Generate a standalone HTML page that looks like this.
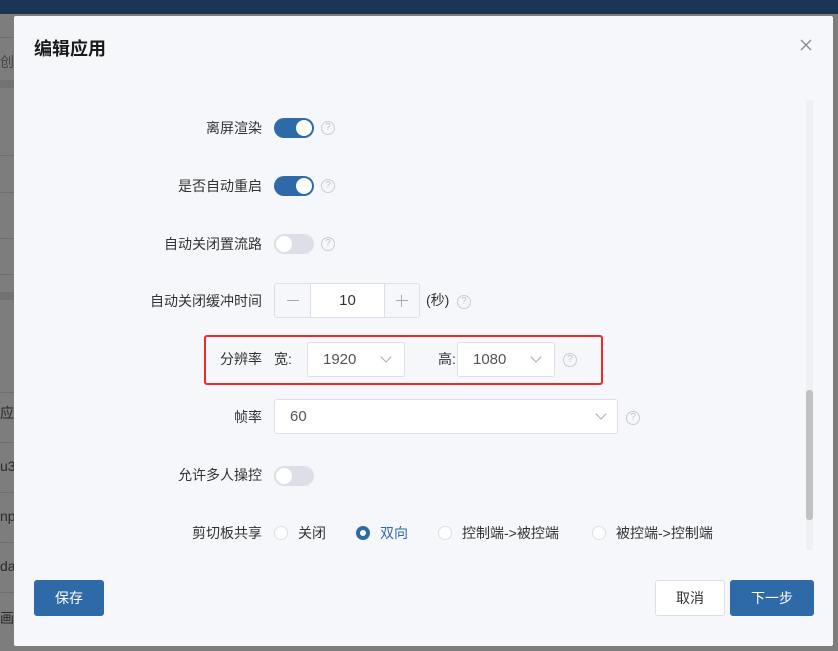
<!DOCTYPE html>
<html><head><meta charset="utf-8"><style>
*{box-sizing:border-box;margin:0;padding:0}
body{width:838px;height:651px;overflow:hidden;background:#7d7d7d;font-family:"Liberation Sans","Noto Sans CJK SC",sans-serif;position:relative;color:#333}
.top{position:absolute;left:0;top:0;width:838px;height:14px;background:#1b3553}
.bgline{position:absolute;left:0;width:14px;height:1px;background:#6e6e6e}
.bgt{position:absolute;left:0;font-size:14px;color:#2a2a2a}
.modal{position:absolute;left:14px;top:16px;width:819px;height:630px;background:#f5f7fb;border-radius:2px}
.title{position:absolute;left:20px;top:21px;font-size:18px;font-weight:bold;color:#1a1a1a;line-height:24px}
.close{position:absolute;left:785px;top:22px;width:14px;height:14px}
.lbl{position:absolute;right:571px;font-size:14px;line-height:20px;color:#333;white-space:nowrap}
.sw{position:absolute;left:260px;width:40px;height:20px;border-radius:10px;background:#2f6aa8}
.sw::after{content:"";position:absolute;top:2px;left:22px;width:16px;height:16px;border-radius:50%;background:#fff}
.sw.off{background:#dcdfe6}.sw.off::after{left:2px}
.q{position:absolute;width:14px;height:14px;border:1px solid #c8ccd6;border-radius:50%;font-size:10px;color:#c0c4cc;text-align:center;line-height:12px}
.box{position:absolute;background:#fff;border:1px solid #dcdfe6;border-radius:3px;font-size:15px;color:#555}
.chev{position:absolute;width:8px;height:8px;border-right:1px solid #aaa;border-bottom:1px solid #aaa;transform:rotate(45deg)}
.radio{position:absolute;width:14px;height:14px;border:1px solid #dcdfe6;border-radius:50%;background:#fff}
.rt{position:absolute;font-size:14px;line-height:20px;color:#333;white-space:nowrap}
.btn{position:absolute;border-radius:3px;font-size:14px;text-align:center;line-height:36px;height:36px}
</style></head><body>
<div class="top"></div>
<div class="bgline" style="top:37px"></div>
<div class="bgt" style="top:52px;color:#444">创</div>
<div class="bgline" style="top:80px;background:#727272;height:8px"></div>
<div class="bgline" style="top:155px"></div>
<div class="bgline" style="top:192px"></div>
<div class="bgline" style="top:238px"></div>
<div class="bgline" style="top:274px"></div>
<div class="bgline" style="top:292px;height:8px;background:#727272"></div>
<div class="bgline" style="top:392px"></div>
<div class="bgt" style="top:403px">应</div>
<div class="bgline" style="top:442px"></div>
<div class="bgt" style="top:458px">u3</div>
<div class="bgline" style="top:492px"></div>
<div class="bgt" style="top:508px">np</div>
<div class="bgline" style="top:542px"></div>
<div class="bgt" style="top:558px">da</div>
<div class="bgline" style="top:592px"></div>
<div class="bgt" style="top:608px">画</div>

<div class="modal">
<div class="title">编辑应用</div>
<svg class="close" viewBox="0 0 14 14"><path d="M2 2L12 12M12 2L2 12" stroke="#888" stroke-width="1.3"/></svg>
<div style="position:absolute;left:792px;top:84px;width:7px;height:450px;background:#eef0f3"></div>
<div style="position:absolute;left:792px;top:374px;width:7px;height:130px;background:#c1c1c1;border-radius:3px"></div>

<div class="lbl" style="top:102px">离屏渲染</div>
<div class="sw" style="top:102px"></div><div class="q" style="left:307px;top:105px">?</div>

<div class="lbl" style="top:160px">是否自动重启</div>
<div class="sw" style="top:160px"></div><div class="q" style="left:307px;top:163px">?</div>

<div class="lbl" style="top:218px">自动关闭置流路</div>
<div class="sw off" style="top:218px"></div><div class="q" style="left:307px;top:221px">?</div>

<div class="lbl" style="top:275px">自动关闭缓冲时间</div>
<div class="box" style="left:260px;top:267px;width:146px;height:35px;background:#f5f7fa">
 <div style="position:absolute;left:35px;top:0;width:75px;height:33px;background:#fff;border-left:1px solid #dcdfe6;border-right:1px solid #dcdfe6;text-align:center;line-height:33px;color:#333;font-size:15px">10</div>
 <div style="position:absolute;left:12px;top:16px;width:12px;height:1px;background:#aaa"></div>
 <div style="position:absolute;left:121px;top:16px;width:12px;height:1px;background:#aaa"></div>
 <div style="position:absolute;left:126px;top:11px;width:1px;height:12px;background:#aaa"></div>
</div>
<div class="rt" style="left:412px;top:274px">(秒)</div>
<div class="q" style="left:443px;top:279px">?</div>

<div style="position:absolute;left:190px;top:319px;width:399px;height:50px;border:2px solid #ee2a2a;border-radius:3px"></div>
<div class="rt" style="left:206px;top:333px">分辨率</div>
<div class="rt" style="left:260px;top:333px">宽:</div>
<div class="box" style="left:293px;top:326px;width:98px;height:35px"><span style="position:absolute;left:15px;top:8px">1920</span><div class="chev" style="left:74px;top:10px"></div></div>
<div class="rt" style="left:424px;top:333px">高:</div>
<div class="box" style="left:443px;top:326px;width:98px;height:35px"><span style="position:absolute;left:15px;top:8px">1080</span><div class="chev" style="left:74px;top:10px"></div></div>
<div class="q" style="left:549px;top:337px">?</div>

<div class="lbl" style="top:391px">帧率</div>
<div class="box" style="left:260px;top:383px;width:344px;height:35px"><span style="position:absolute;left:15px;top:8px">60</span><div class="chev" style="left:322px;top:10px"></div></div>
<div class="q" style="left:612px;top:395px">?</div>

<div class="lbl" style="top:449px">允许多人操控</div>
<div class="sw off" style="top:450px"></div>

<div class="lbl" style="top:507px">剪切板共享</div>
<div class="radio" style="left:260px;top:510px"></div><div class="rt" style="left:284px;top:507px">关闭</div>
<div class="radio" style="left:342px;top:510px;border:4px solid #2f6aa8"></div><div class="rt" style="left:366px;top:507px;color:#2f6aa8">双向</div>
<div class="radio" style="left:424px;top:510px"></div><div class="rt" style="left:448px;top:507px">控制端->被控端</div>
<div class="radio" style="left:578px;top:510px"></div><div class="rt" style="left:602px;top:507px">被控端->控制端</div>

<div class="btn" style="left:20px;top:564px;width:70px;background:#2f6aa8;color:#fff">保存</div>
<div class="btn" style="left:641px;top:564px;width:70px;background:#fff;border:1px solid #dcdfe6;color:#333;line-height:34px">取消</div>
<div class="btn" style="left:716px;top:564px;width:84px;background:#2f6aa8;color:#fff">下一步</div>
</div>
</body></html>
